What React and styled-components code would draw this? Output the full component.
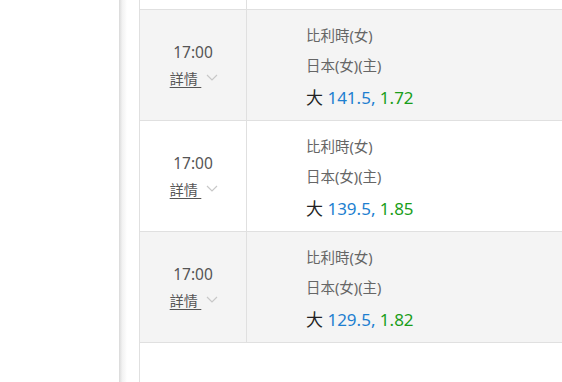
import styled, { createGlobalStyle } from "styled-components";

const GlobalStyle = createGlobalStyle`
  html, body {
    margin: 0;
    padding: 0;
    background: #fff;
    overflow: hidden;
  }
  body {
    font-family: "Noto Sans", "Noto Sans CJK TC", sans-serif;
  }
`;

const matches = [
  { time: "17:00", away: "比利時(女)", home: "日本(女)(主)", line: "141.5", odds: "1.72" },
  { time: "17:00", away: "比利時(女)", home: "日本(女)(主)", line: "139.5", odds: "1.85" },
  { time: "17:00", away: "比利時(女)", home: "日本(女)(主)", line: "129.5", odds: "1.82" },
];

export default function App() {
  return (
    <>
      <GlobalStyle />
      <Page>
        <Sidebar />
        <Shadow />
        <Main>
          <Table>
            {/* tail of the row scrolled out above */}
            <Row $stub>
              <TimeCell />
              <GameCell />
            </Row>
            {matches.map((m, i) => (
              <Row key={i} $alt={i % 2 === 0}>
                <TimeCell>
                  <Time>{m.time}</Time>
                  <Details>
                    <span className="link">詳情&nbsp;</span>
                    <Chevron width="12" height="7" viewBox="0 0 12 7">
                      <path d="M1 1l5 5 5-5" fill="none" stroke="#c8c8c8" strokeWidth="1.2" />
                    </Chevron>
                  </Details>
                </TimeCell>
                <GameCell>
                  <Team>{m.away}</Team>
                  <Team>{m.home}</Team>
                  <Line>
                    <span className="label">大</span> <span className="num">{m.line},</span>{" "}
                    <span className="odds">{m.odds}</span>
                  </Line>
                </GameCell>
              </Row>
            ))}
          </Table>
        </Main>
      </Page>
    </>
  );
}

const Page = styled.div`
  display: flex;
  height: 382px;
  overflow: hidden;
`;

const Sidebar = styled.div`
  width: 119px;
  flex-shrink: 0;
  background: #fff;
`;

const Shadow = styled.div`
  width: 8px;
  flex-shrink: 0;
  background: linear-gradient(to right, #d9d9d9, #f2f2f2 40%, #fafafa 80%, #fff);
`;

const Main = styled.div`
  flex: 1;
  padding-left: 12px;
  min-width: 0;
`;

const Table = styled.div`
  width: 600px;
  height: 382px;
  border-left: 1px solid #e0e0e0;
`;

const Row = styled.div`
  display: flex;
  height: ${({ $stub }) => ($stub ? "9px" : "110px")};
  border-bottom: 1px solid #e0e0e0;
  background: ${({ $alt }) => ($alt ? "#f4f4f4" : "#fff")};
`;

const TimeCell = styled.div`
  width: 107px;
  flex-shrink: 0;
  border-right: 1px solid #e0e0e0;
  display: flex;
  flex-direction: column;
  align-items: center;
  justify-content: center;
  gap: 7px;
  box-sizing: border-box;
`;

const Time = styled.div`
  font-size: 15.5px;
  color: #555;
  line-height: 20px;
`;

const Details = styled.div`
  display: flex;
  align-items: center;
  gap: 5px;
  font-size: 14px;
  line-height: 20px;
  color: #555;
  margin-left: 2px;

  .link {
    text-decoration: underline;
    text-underline-offset: 3px;
  }
`;

const Chevron = styled.svg`
  display: block;
  margin-top: -3px;
`;

const GameCell = styled.div`
  flex: 1;
  padding: 10px 0 0 59px;
  display: flex;
  flex-direction: column;
`;

const Team = styled.div`
  font-size: 14.5px;
  line-height: 30px;
  color: #666;
`;

const Line = styled.div`
  font-size: 17px;
  line-height: 36px;
  color: #222;

  .num {
    color: #1e7fd0;
  }
  .odds {
    color: #1a9e1a;
  }
`;
